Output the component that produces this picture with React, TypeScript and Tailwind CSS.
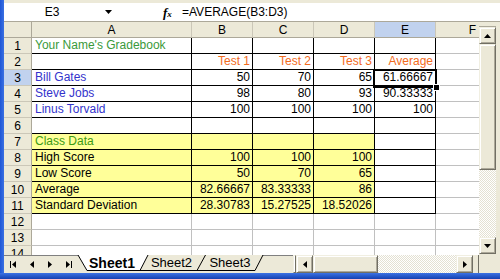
import React from 'react';

type C = { t?: string; c?: string; r?: boolean; bg?: string };

const FONT = "font-['Liberation_Sans',Arial,sans-serif]";
const W = ['w-[160px]', 'w-[61px]', 'w-[61px]', 'w-[61px]', 'w-[61px]'];
const G = 'text-[#3A9A3A]';
const G2 = 'text-[#3C9A14]';
const O = 'text-[#F26B1D]';
const BL = 'text-[#3333CC]';
const Y = 'bg-[#FFFF99]';

const n = (t: string, bg?: string): C => ({ t, r: true, bg });

const ROWS: C[][] = [
  [{ t: "Your Name's Gradebook", c: G }, {}, {}, {}, {}],
  [{}, { t: 'Test 1', c: O, r: true }, { t: 'Test 2', c: O, r: true }, { t: 'Test 3', c: O, r: true }, { t: 'Average', c: O, r: true }],
  [{ t: 'Bill Gates', c: BL }, n('50'), n('70'), n('65'), n('61.66667')],
  [{ t: 'Steve Jobs', c: BL }, n('98'), n('80'), n('93'), n('90.33333')],
  [{ t: 'Linus Torvald', c: BL }, n('100'), n('100'), n('100'), n('100')],
  [{}, {}, {}, {}, {}],
  [{ t: 'Class Data', c: G2, bg: Y }, { bg: Y }, { bg: Y }, { bg: Y }, {}],
  [{ t: 'High Score', bg: Y }, n('100', Y), n('100', Y), n('100', Y), {}],
  [{ t: 'Low Score', bg: Y }, n('50', Y), n('70', Y), n('65', Y), {}],
  [{ t: 'Average', bg: Y }, n('82.66667', Y), n('83.33333', Y), n('86', Y), {}],
  [{ t: 'Standard Deviation', bg: Y }, n('28.30783', Y), n('15.27525', Y), n('18.52026', Y), {}],
  [{}, {}, {}, {}, {}],
  [{}, {}, {}, {}, {}],
  [{}, {}, {}, {}, {}],
];

const BTN =
  'box-border bg-[#ECE9D8] border border-t-[#F1EFE2] border-l-[#F1EFE2] border-r-[#716F64] border-b-[#716F64] shadow-[inset_1px_1px_0_#ffffff,inset_-1px_-1px_0_#ACA899] flex items-center justify-center shrink-0';
const HATCH = 'bg-[repeating-conic-gradient(#E4E1D2_0%_25%,#FFFFFF_0%_50%)] bg-[length:2px_2px]';

function Tri({ dir, w, h }: { dir: 'u' | 'd' | 'l' | 'r'; w: number; h: number }) {
  const pts =
    dir === 'u' ? `${w / 2},0 ${w},${h} 0,${h}` :
    dir === 'd' ? `0,0 ${w},0 ${w / 2},${h}` :
    dir === 'l' ? `${w},0 ${w},${h} 0,${h / 2}` :
    `0,0 ${w},${h / 2} 0,${h}`;
  return (
    <svg width={w} height={h} viewBox={`0 0 ${w} ${h}`} className="block">
      <polygon points={pts} fill="#000" />
    </svg>
  );
}

function FormulaBar() {
  return (
    <div className="h-[22px] flex flex-col shrink-0">
      <div className="h-[3px] bg-[#ECE9D8]" />
      <div className="flex-1 flex items-center bg-white border-b border-[#ACA899]">
        <div className="w-[96px] text-center text-[12px]">E3</div>
        <div className="w-[17px] flex justify-center">
          <Tri dir="d" w={7} h={4} />
        </div>
        <div className="w-[46px]" />
        <div className="w-[12px] font-['Liberation_Serif',serif] italic font-bold text-[13px] leading-none">
          f<span className="text-[9px]">x</span>
        </div>
        <div className="pl-[7px] text-[12px] whitespace-nowrap">=AVERAGE(B3:D3)</div>
      </div>
    </div>
  );
}

function HeaderRow() {
  const letters = ['A', 'B', 'C', 'D', 'E'];
  return (
    <div className="flex h-[16px] shrink-0">
      <div className="w-[28px] shrink-0 box-border bg-[#ECE9D8] border-r border-b border-r-[#ACA899] border-b-[#ACA899]" />
      {letters.map((l, i) => (
        <div
          key={l}
          className={`${W[i]} shrink-0 box-border border-r border-b border-r-[#CBC7B8] border-b-[#ACA899] flex items-center justify-center ${l === 'E' ? 'bg-[#C1D2EE]' : 'bg-[#ECE9D8]'}`}
        >
          {l}
        </div>
      ))}
      <div className="flex-1 box-border bg-[#ECE9D8] border-b border-b-[#ACA899] flex items-center justify-center pl-[30px]">F</div>
    </div>
  );
}

function Row({ num, cells }: { num: number; cells: C[] }) {
  const inTable = num <= 11;
  return (
    <div className="flex h-[16px] shrink-0">
      <div
        className={`w-[28px] shrink-0 box-border border-r border-b border-r-[#ACA899] border-b-[#CBC7B8] flex items-center justify-center ${num === 3 ? 'bg-[#C1D2EE]' : 'bg-[#ECE9D8]'}`}
      >
        {num}
      </div>
      {W.map((w, i) => {
        const c = cells[i] || {};
        return (
          <div
            key={i}
            className={`${w} shrink-0 box-border border-r border-b ${inTable ? 'border-black' : 'border-[#C0C0C0]'} ${c.bg ?? 'bg-white'} flex items-end leading-[15px] whitespace-nowrap overflow-hidden ${c.r ? 'justify-end pr-[2px]' : 'pl-[3px]'} ${c.c ?? 'text-black'}`}
          >
            {c.t}
          </div>
        );
      })}
      <div className="flex-1 box-border border-b border-[#C0C0C0] bg-white" />
    </div>
  );
}

function Sheet() {
  return (
    <div className="w-[475px] h-full overflow-hidden flex flex-col bg-white relative shrink-0">
      <HeaderRow />
      {ROWS.map((cells, i) => (
        <Row key={i} num={i + 1} cells={cells} />
      ))}
      <div className="absolute left-[369px] top-[47px] w-[64px] h-[19px] border-2 border-black pointer-events-none" />
      <div className="absolute left-[429px] top-[62px] w-[5px] h-[5px] bg-black border border-white box-content pointer-events-none" />
    </div>
  );
}

function VScroll() {
  return (
    <div className="w-[17px] h-full flex flex-col shrink-0">
      <div className="h-[5px] bg-[#ECE9D8] border-b border-[#ACA899]" />
      <div className={`${BTN} h-[17px]`}>
        <Tri dir="u" w={7} h={4} />
      </div>
      <div className={`${BTN} h-[126px]`} />
      <div className={`h-[67px] ${HATCH}`} />
      <div className={`${BTN} h-[17px]`}>
        <Tri dir="d" w={7} h={4} />
      </div>
      <div className="flex-1 bg-[#ECE9D8]" />
    </div>
  );
}

function Tabs() {
  return (
    <div className="w-[189px] h-full relative shrink-0">
      <svg width="189" height="18" viewBox="0 0 189 18" className="absolute inset-0">
        <line x1="0" y1="0.5" x2="1" y2="0.5" stroke="#808080" />
        <line x1="71" y1="0.5" x2="189" y2="0.5" stroke="#808080" />
        <polygon points="128.5,0 186,0 178,15.5 120,15.5" fill="#ECE9D8" />
        <polygon points="71,0 128.5,0 120,15.5 63,15.5" fill="#ECE9D8" />
        <polygon points="1,0 71,0 63,15.5 10,15.5" fill="#FFFFFF" />
        <polyline points="1,0 10,15.5 63,15.5 71,0" fill="none" stroke="#000" strokeWidth="1" />
        <polyline points="63,15.5 120,15.5 128.5,0" fill="none" stroke="#000" strokeWidth="1" />
        <polyline points="120,15.5 178,15.5 186,0" fill="none" stroke="#000" strokeWidth="1" />
      </svg>
      <div className="relative flex h-[16px] items-center">
        <div className="w-[6px]" />
        <div className="w-[58px] text-center font-bold text-[14px]">Sheet1</div>
        <div className="w-[61px] text-center text-[13px]">Sheet2</div>
        <div className="w-[56px] text-center text-[13px]">Sheet3</div>
      </div>
    </div>
  );
}

function TabBar() {
  return (
    <div className="h-[18px] flex shrink-0 bg-[#ECE9D8]">
      <div className="w-[73px] shrink-0 flex items-center pl-[6px] border-t border-[#808080]">
        <div className="flex items-center gap-[1px]">
          <div className="w-[1px] h-[7px] bg-black" />
          <Tri dir="l" w={4} h={7} />
        </div>
        <div className="w-[14px]" />
        <Tri dir="l" w={4} h={7} />
        <div className="w-[14px]" />
        <Tri dir="r" w={4} h={7} />
        <div className="w-[14px]" />
        <div className="flex items-center gap-[1px]">
          <Tri dir="r" w={4} h={7} />
          <div className="w-[1px] h-[7px] bg-black" />
        </div>
      </div>
      <Tabs />
      <div className="w-[27px] shrink-0 border-t border-[#808080]" />
      <div className="w-[186px] shrink-0 flex">
        <div className={`${BTN} w-[3px] h-full`} />
        <div className={`${BTN} w-[17px] h-full`}>
          <Tri dir="l" w={4} h={7} />
        </div>
        <div className={`${BTN} w-[65px] h-full`} />
        <div className={`flex-1 h-full ${HATCH}`} />
        <div className={`${BTN} w-[17px] h-full`}>
          <Tri dir="r" w={4} h={7} />
        </div>
        <div className="w-[6px] h-full bg-[#ECE9D8] border-r border-[#716F64]" />
      </div>
      <div className="w-[17px] shrink-0 bg-[#ECE9D8]" />
      <div className="w-[4px] shrink-0 bg-[#ECE9D8]" />
    </div>
  );
}

export default function App() {
  return (
    <div className={`w-[500px] h-[279px] overflow-hidden flex flex-col bg-[#ECE9D8] text-[12px] text-black ${FONT}`}>
      <div className="flex h-[273px] shrink-0">
        <div className="w-[4px] shrink-0 bg-gradient-to-r from-[#1F56D6] to-[#3A70E2]" />
        <div className="flex flex-col w-[496px]">
          <FormulaBar />
          <div className="flex h-[233px] shrink-0">
            <Sheet />
            <VScroll />
            <div className="w-[4px] bg-[#ECE9D8]" />
          </div>
          <TabBar />
        </div>
      </div>
      <div className="h-[6px] shrink-0 bg-gradient-to-b from-[#3C72E4] to-[#1540B0]" />
    </div>
  );
}
